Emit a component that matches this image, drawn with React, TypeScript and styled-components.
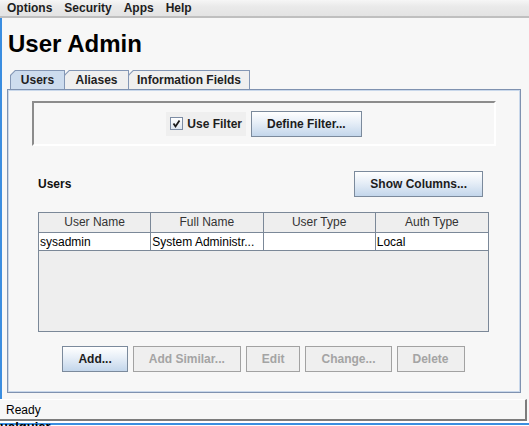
import React from 'react';
import styled, { createGlobalStyle } from 'styled-components';

const Global = createGlobalStyle`
  html, body { margin: 0; padding: 0; width: 529px; height: 426px; overflow: hidden; background: #f7f7f7; }
  body { font-family: "Liberation Sans", Arial, sans-serif; font-size: 12px; color: #000; }
  * { box-sizing: border-box; }
`;

const Window = styled.div`
  width: 529px;
  height: 426px;
  display: flex;
  flex-direction: column;
  background: #f7f7f7;
`;

const MenuBar = styled.div`
  flex: none;
  height: 18px;
  display: flex;
  padding-left: 1px;
  background: linear-gradient(#f6f6f6, #eaeaea 40%, #e3e3e3);
  border-bottom: 2px solid #bfbfbf;
`;

const MenuItem = styled.div`
  padding: 0 6px;
  font-weight: bold;
  line-height: 16px;
  color: #1e1e1e;
`;

const Main = styled.div`
  flex: 1;
  display: flex;
  flex-direction: column;
  border-left: 2px solid #3a8de0;
  padding: 0 8px 0 5px;
`;

const Title = styled.h1`
  margin: 12px 0 0 1px;
  height: 28px;
  font-size: 24px;
  line-height: 28px;
  font-weight: bold;
  color: #000;
`;

const TabRow = styled.div`
  display: flex;
  margin: 12px 0 0 3px;
  height: 19px;
`;

const TabShape = styled.div<{ $w: number }>`
  width: ${p => p.$w}px;
  height: 19px;
  margin-right: -1px;
  padding: 1px 1px 0 1px;
  background: #8497b5;
  clip-path: polygon(0 5px, 5px 0, 100% 0, 100% 100%, 0 100%);
`;

const TabFace = styled.div<{ $active?: boolean }>`
  height: 100%;
  background: ${p => (p.$active ? '#cddcee' : '#efefef')};
  clip-path: polygon(0 4.5px, 4.5px 0, 100% 0, 100% 100%, 0 100%);
  font-weight: bold;
  text-align: center;
  line-height: 18px;
  color: #1e1e1e;
`;

const Panel = styled.div`
  display: flex;
  flex-direction: column;
  border: 1px solid #7f92b0;
  box-shadow: inset 0 0 0 1px #c9d8eb;
  padding: 11px 24px 20px;
  background: #f7f7f7;
`;

const FilterBox = styled.div`
  height: 45px;
  display: flex;
  align-items: center;
  justify-content: center;
  gap: 5px;
  border-style: solid;
  border-width: 2px;
  border-color: #8c8c8c #ffffff #ffffff #8c8c8c;
`;

const CheckArea = styled.label`
  height: 24px;
  display: flex;
  align-items: center;
  gap: 4px;
  padding: 0 4px;
  background: #efefef;
  font-weight: bold;
  color: #1e1e1e;
`;

const CheckBox = styled.span`
  width: 13px;
  height: 13px;
  border: 1px solid #7c8ca4;
  background: linear-gradient(#ffffff, #dde6f1);
  display: flex;
  svg { display: block; }
`;

const Button = styled.button`
  height: 26px;
  padding: 0 15px;
  font: bold 12px "Liberation Sans", Arial, sans-serif;
  color: #1c1c1c;
  border: 1px solid #7b8a9c;
  background: linear-gradient(#ffffff, #e6eef7 45%, #c3d6eb);
  border-radius: 0;
  cursor: default;
  &:disabled {
    color: #a4a4a4;
    border-color: #a2a2a2;
    background: #efefef;
  }
`;

const Section = styled.div`
  display: flex;
  flex-direction: column;
  margin-top: 25px;
  padding: 0 7px 0 6px;
`;

const SectionHead = styled.div`
  height: 26px;
  display: flex;
  align-items: center;
  justify-content: space-between;
  padding-right: 6px;
`;

const SectionLabel = styled.div`
  font-weight: bold;
  color: #111;
`;

const Table = styled.div`
  margin-top: 15px;
  height: 120px;
  border: 1px solid #7b8898;
  background: #eeeeee;
`;

const Row = styled.div<{ $head?: boolean }>`
  display: grid;
  grid-template-columns: repeat(4, 1fr);
  height: ${p => (p.$head ? 20 : 18)}px;
  border-bottom: 1px solid #7b8898;
  background: ${p => (p.$head ? '#eeeeee' : '#ffffff')};
`;

const Cell = styled.div<{ $head?: boolean }>`
  border-right: 1px solid #7b8898;
  &:last-child { border-right: none; }
  overflow: hidden;
  white-space: nowrap;
  text-align: ${p => (p.$head ? 'center' : 'left')};
  color: ${p => (p.$head ? '#333' : '#000')};
  line-height: ${p => (p.$head ? '19px' : '17px')};
  padding: ${p => (p.$head ? '0' : '1px 0 0 1px')};
`;

const ButtonRow = styled.div`
  display: flex;
  justify-content: center;
  gap: 5px;
  margin-top: 14px;
`;

const StatusBar = styled.div`
  flex: none;
  height: 22px;
  margin-right: 2px;
  border-top: 1px solid #ffffff;
  border-bottom: 2px solid #7c7c7c;
  border-right: 2px solid #7c7c7c;
  padding: 2px 0 0 6px;
  line-height: 17px;
  background: #f7f7f7;
  color: #000;
`;

const BottomStrip = styled.div`
  flex: none;
  height: 5px;
  position: relative;
  background: linear-gradient(#ffffff 0 2px, #3b8fe0 2px 4px, #ffffff 4px);
`;

const BehindText = styled.div`
  position: absolute;
  left: 0;
  top: -1px;
  font-weight: bold;
  font-size: 13px;
  line-height: 13px;
  color: #000;
`;

const tabs = [
  { label: 'Users', w: 55, active: true },
  { label: 'Aliases', w: 65 },
  { label: 'Information Fields', w: 122 },
];

const columns = ['User Name', 'Full Name', 'User Type', 'Auth Type'];
const rows = [['sysadmin', 'System Administr...', '', 'Local']];

export default function App() {
  return (
    <>
      <Global />
      <Window>
        <MenuBar>
          {['Options', 'Security', 'Apps', 'Help'].map(m => (
            <MenuItem key={m}>{m}</MenuItem>
          ))}
        </MenuBar>
        <Main>
          <Title>User Admin</Title>
          <TabRow>
            {tabs.map(t => (
              <TabShape key={t.label} $w={t.w}>
                <TabFace $active={t.active}>{t.label}</TabFace>
              </TabShape>
            ))}
          </TabRow>
          <Panel>
            <FilterBox>
              <CheckArea>
                <CheckBox>
                  <svg width="11" height="11" viewBox="0 0 11 11">
                    <path d="M2.5 5.5 L4.5 8.5 L8.5 2.5" fill="none" stroke="#1a1a1a" strokeWidth="1.8" />
                  </svg>
                </CheckBox>
                Use Filter
              </CheckArea>
              <Button>Define Filter...</Button>
            </FilterBox>
            <Section>
              <SectionHead>
                <SectionLabel>Users</SectionLabel>
                <Button>Show Columns...</Button>
              </SectionHead>
              <Table>
                <Row $head>
                  {columns.map(c => (
                    <Cell key={c} $head>{c}</Cell>
                  ))}
                </Row>
                {rows.map((r, i) => (
                  <Row key={i}>
                    {r.map((v, j) => (
                      <Cell key={j}>{v}</Cell>
                    ))}
                  </Row>
                ))}
              </Table>
              <ButtonRow>
                <Button>Add...</Button>
                <Button disabled>Add Similar...</Button>
                <Button disabled>Edit</Button>
                <Button disabled>Change...</Button>
                <Button disabled>Delete</Button>
              </ButtonRow>
            </Section>
          </Panel>
        </Main>
        <StatusBar>Ready</StatusBar>
        <BottomStrip>
          <BehindText>ualquier</BehindText>
        </BottomStrip>
      </Window>
    </>
  );
}
